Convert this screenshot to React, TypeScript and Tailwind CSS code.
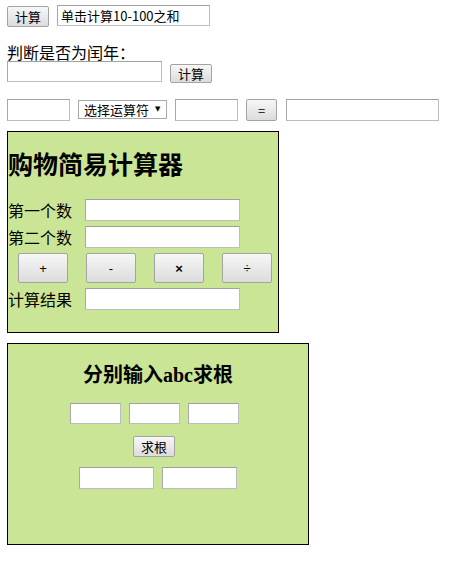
import React from "react";

const font = { fontFamily: '"Noto Sans CJK SC", "Liberation Sans", sans-serif' };

function Btn({ className, children }: { className: string; children?: React.ReactNode }) {
  return (
    <button
      className={
        "flex items-center justify-center rounded-[2px] border border-[#a3a3a3] bg-gradient-to-b from-[#f7f7f7] to-[#dcdcdc] p-0 text-[13px] leading-none text-black " +
        className
      }
    >
      {children}
    </button>
  );
}

function Input({ className, value }: { className: string; value?: string }) {
  return (
    <input
      readOnly
      value={value ?? ""}
      className={
        "box-border border border-t-[#a0a0a0] border-l-[#a9a9a9] border-r-[#bdbdbd] border-b-[#bdbdbd] bg-white px-[3px] text-[13px] text-black outline-none " +
        className
      }
    />
  );
}

export default function App() {
  return (
    <div className="min-h-[563px] w-[460px] bg-white pl-[7px] text-black" style={font}>
      {/* Row 1 */}
      <div className="flex h-[22px] items-start pt-0" style={{ marginTop: 5 }}>
        <Btn className="mt-[1px] h-[21px] w-[42px]">计算</Btn>
        <Input className="ml-[8px] h-[21px] w-[153px]" value="单击计算10-100之和" />
      </div>

      {/* Row 2 */}
      <div className="mt-[16px] text-[16px] leading-[18px]">判断是否为闰年：</div>
      <div className="flex items-start">
        <Input className="h-[21px] w-[155px]" />
        <Btn className="ml-[8px] mt-[3px] h-[19px] w-[42px]">计算</Btn>
      </div>

      {/* Row 3 */}
      <div className="mt-[16px] flex items-start">
        <Input className="h-[22px] w-[63px]" />
        <div className="ml-[8px] mt-[1px] box-border flex h-[19px] w-[89px] items-center border border-[#a9a9a9] bg-white pl-[5px] text-[13px] leading-none">
          <span>选择运算符</span>
          <span className="ml-[6px] text-[7px]" style={{ fontFamily: '"DejaVu Sans", sans-serif' }}>▼</span>
        </div>
        <Input className="ml-[8px] h-[22px] w-[63px]" />
        <Btn className="ml-[8px] h-[22px] w-[31px]">=</Btn>
        <Input className="ml-[9px] h-[22px] w-[153px]" />
      </div>

      {/* Box 1 */}
      <div className="mt-[10px] box-border h-[202px] w-[272px] border border-black bg-[#cbe597] pt-[19px]">
        <div
          className="text-[25px] font-bold leading-[29px]"
          style={{ fontFamily: '"Liberation Serif", "Noto Sans CJK SC", serif' }}
        >
          购物简易计算器
        </div>
        <div className="mt-[19px] flex items-center">
          <span className="w-[77px] text-[16px] leading-none">第一个数</span>
          <Input className="h-[22px] w-[155px]" />
        </div>
        <div className="mt-[5px] flex items-center">
          <span className="w-[77px] text-[16px] leading-none">第二个数</span>
          <Input className="h-[22px] w-[155px]" />
        </div>
        <div className="mt-[5px] flex gap-[18px] pl-[10px]" style={{ fontFamily: '"Liberation Sans", sans-serif' }}>
          <Btn className="h-[30px] w-[50px] text-[12px]">+</Btn>
          <Btn className="h-[30px] w-[50px] text-[12px]">-</Btn>
          <Btn className="h-[30px] w-[50px] text-[12px] font-bold">×</Btn>
          <Btn className="h-[30px] w-[50px] text-[12px] text-[#555]">÷</Btn>
        </div>
        <div className="mt-[5px] flex items-center">
          <span className="w-[77px] text-[16px] leading-none">计算结果</span>
          <Input className="h-[22px] w-[155px]" />
        </div>
      </div>

      {/* Box 2 */}
      <div className="mt-[10px] box-border h-[202px] w-[302px] border border-black bg-[#cbe597] pt-[19px]">
        <div
          className="text-center text-[20px] font-bold leading-[24px]"
          style={{ fontFamily: '"Liberation Serif", "Noto Sans CJK SC", serif' }}
        >
          分别输入abc求根
        </div>
        <div className="mt-[16px] flex justify-center gap-[8px] pr-[7px]">
          <Input className="h-[21px] w-[51px]" />
          <Input className="h-[21px] w-[51px]" />
          <Input className="h-[21px] w-[51px]" />
        </div>
        <div className="mt-[12px] flex justify-center pr-[8px]">
          <Btn className="h-[21px] w-[42px]">求根</Btn>
        </div>
        <div className="mt-[10px] flex justify-center gap-[8px]">
          <Input className="h-[22px] w-[75px]" />
          <Input className="h-[22px] w-[75px]" />
        </div>
      </div>
    </div>
  );
}
